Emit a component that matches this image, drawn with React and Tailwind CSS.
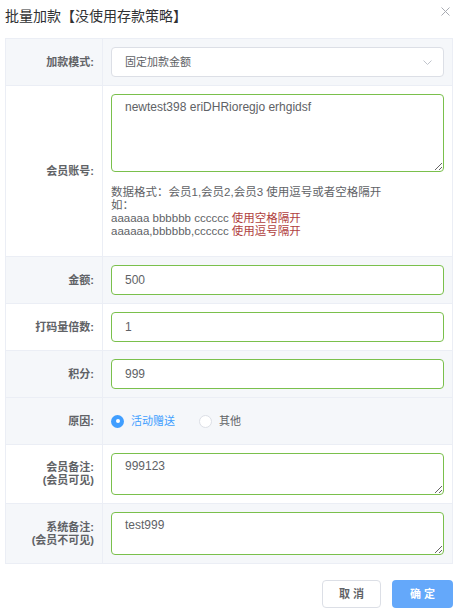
import React from "react";

const font = "font-['Liberation_Sans','Noto_Sans_CJK_SC',sans-serif]";

function Label({ children }) {
  return (
    <div className="w-[97px] shrink-0 border-r border-[#ebeef5] flex flex-col items-end justify-center pr-[8px] text-[11px] leading-[13px] font-bold text-[#606266] text-right">
      {children}
    </div>
  );
}

function Row({ gray, label, children, last }) {
  return (
    <div className={`flex ${last ? "" : "border-b"} border-[#ebeef5] ${gray ? "bg-[#f5f7fa]" : "bg-white"}`}>
      <Label>{label}</Label>
      <div className="flex-1 p-2">{children}</div>
    </div>
  );
}

function TextInput({ value }) {
  return (
    <div className="h-[30px] border border-[#7ac04c] rounded-[4px] bg-white flex items-center pl-[13px] text-[12px] text-[#606266]">
      {value}
    </div>
  );
}

function Area({ value, h }) {
  return (
    <textarea
      readOnly
      defaultValue={value}
      className={`block w-full ${h} border border-[#7ac04c] rounded-[4px] bg-white pl-[13px] pt-[5px] text-[12px] leading-[14px] text-[#606266] outline-none resize-y ${font}`}
    />
  );
}

export default function App() {
  return (
    <div className={`w-[459px] h-[614px] bg-white ${font}`}>
      <div className="h-[38px] flex justify-between pl-[5px] pr-[9px] pt-[8px]">
        <div className="text-[14px] leading-[16px] text-[#303133]">批量加款【没使用存款策略】</div>
        <svg width="9" height="9" viewBox="0 0 9 9" className="mt-[-1px]">
          <path d="M0.5 0.5 L8.5 8.5 M8.5 0.5 L0.5 8.5" stroke="#a8abb2" strokeWidth="1" fill="none" />
        </svg>
      </div>

      <div className="mx-[5px] w-[448px] border border-[#ebeef5]">
        <Row gray label="加款模式:">
          <div className="h-[30px] border border-[#dcdfe6] rounded-[4px] bg-white flex items-center justify-between pl-[13px] pr-[11px] text-[11px] text-[#606266]">
            <span>固定加款金额</span>
            <svg width="9" height="5" viewBox="0 0 9 5">
              <path d="M0.5 0.5 L4.5 4.5 L8.5 0.5" stroke="#c0c4cc" strokeWidth="1" fill="none" />
            </svg>
          </div>
        </Row>

        <Row label="会员账号:">
          <Area value="newtest398 eriDHRioregjo erhgidsf" h="h-[78px]" />
          <div className="mt-[14px] mb-[10px] text-[11.5px] leading-[13px] text-[#606266]">
            <div>数据格式：会员1,会员2,会员3 使用逗号或者空格隔开</div>
            <div>如：</div>
            <div>
              aaaaaa bbbbbb cccccc <span className="text-[#b0413e]">使用空格隔开</span>
            </div>
            <div>
              aaaaaa,bbbbbb,cccccc <span className="text-[#b0413e]">使用逗号隔开</span>
            </div>
          </div>
        </Row>

        <Row gray label="金额:">
          <TextInput value="500" />
        </Row>
        <Row label="打码量倍数:">
          <TextInput value="1" />
        </Row>
        <Row gray label="积分:">
          <TextInput value="999" />
        </Row>
        <Row gray label="原因:">
          <div className="h-[30px] flex items-center text-[11px]">
            <span className="w-[13px] h-[13px] rounded-full bg-[#409eff] flex items-center justify-center">
              <span className="w-[4px] h-[4px] rounded-full bg-white" />
            </span>
            <span className="ml-[7px] text-[#409eff]">活动赠送</span>
            <span className="ml-[24px] w-[13px] h-[13px] rounded-full border border-[#dcdfe6] bg-white" />
            <span className="ml-[7px] text-[#606266]">其他</span>
          </div>
        </Row>
        <Row
          label={
            <>
              <div>会员备注:</div>
              <div>(会员可见)</div>
            </>
          }
        >
          <Area value="999123" h="h-[42px]" />
        </Row>
        <Row
          gray
          last
          label={
            <>
              <div>系统备注:</div>
              <div>(会员不可见)</div>
            </>
          }
        >
          <Area value="test999" h="h-[43px]" />
        </Row>
      </div>

      <div className="flex justify-end gap-[11px] pr-[6px] pt-[16px]">
        <button className="w-[59px] h-[28px] border border-[#dcdfe6] rounded-[4px] bg-white text-[11px] font-bold text-[#606266]">
          取 消
        </button>
        <button className="w-[61px] h-[28px] rounded-[4px] bg-[#64a8fa] text-[11px] font-bold text-white">
          确 定
        </button>
      </div>
    </div>
  );
}
